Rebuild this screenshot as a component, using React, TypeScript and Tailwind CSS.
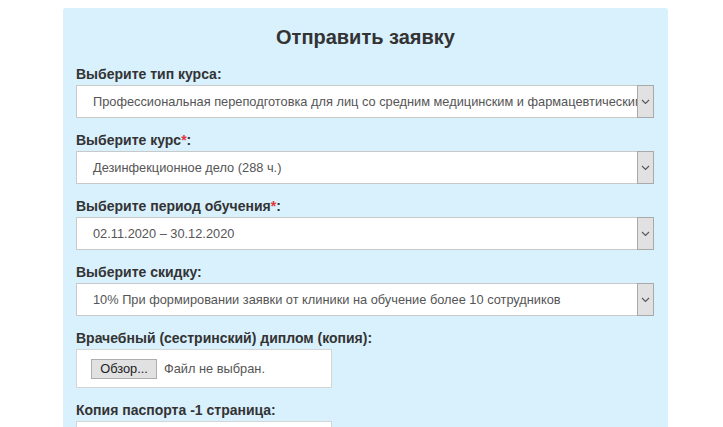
import React from "react";

const Chevron = () => (
  <svg width="9" height="6" viewBox="0 0 9 6" className="block">
    <path d="M1 1 L4.5 4.5 L8 1" fill="none" stroke="#555" strokeWidth="1.1" />
  </svg>
);

function Select({ value }: { value: string }) {
  return (
    <div className="flex h-[33px] w-[578px] border border-[#c9c9c9] bg-white">
      <div className="flex min-w-0 flex-1 items-center overflow-hidden whitespace-nowrap pl-[16px] pt-px text-[12.8px] text-[#555]">
        {value}
      </div>
      <div className="-my-px -mr-px flex w-[17px] shrink-0 items-center justify-center border border-[#a9a9a9] bg-[#e1e1e1]">
        <Chevron />
      </div>
    </div>
  );
}

function Label({ text, req }: { text: string; req?: boolean }) {
  return (
    <div className="mb-[3px] text-[14px] font-bold leading-[16px] text-[#333]">
      {text}
      {req && <span className="text-[#e3353b]">*</span>}:
    </div>
  );
}

function FileBox() {
  return (
    <div className="flex h-[39px] w-[256px] items-center border border-[#d5d5d5] bg-white pl-[14px]">
      <div className="flex h-[20px] w-[66px] items-center justify-center border border-[#adadad] bg-[#e1e1e1] text-[12.8px] text-[#222]">
        Обзор...
      </div>
      <span className="ml-[7px] text-[12.8px] text-[#555]">Файл не выбран.</span>
    </div>
  );
}

export default function App() {
  return (
    <div className="h-[427px] overflow-hidden bg-white pt-[8px] font-['Liberation_Sans',Arial,sans-serif]">
      <div className="ml-[63px] w-[605px] rounded-[3px] bg-[#d9f0fd] px-[13px] pt-[17px] pb-[20px]">
        <h2 className="mb-[17px] text-center text-[20px] font-bold leading-[24px] text-[#333]">
          Отправить заявку
        </h2>
        <div className="flex flex-col gap-[14px]">
          <div>
            <Label text="Выберите тип курса" />
            <Select value="Профессиональная переподготовка для лиц со средним медицинским и фармацевтическим образованием" />
          </div>
          <div>
            <Label text="Выберите курс" req />
            <Select value="Дезинфекционное дело (288 ч.)" />
          </div>
          <div>
            <Label text="Выберите период обучения" req />
            <Select value="02.11.2020 – 30.12.2020" />
          </div>
          <div>
            <Label text="Выберите скидку" />
            <Select value="10% При формировании заявки от клиники на обучение более 10 сотрудников" />
          </div>
          <div>
            <Label text="Врачебный (сестринский) диплом (копия)" />
            <FileBox />
          </div>
          <div>
            <Label text="Копия паспорта -1 страница" />
            <FileBox />
          </div>
        </div>
      </div>
    </div>
  );
}
